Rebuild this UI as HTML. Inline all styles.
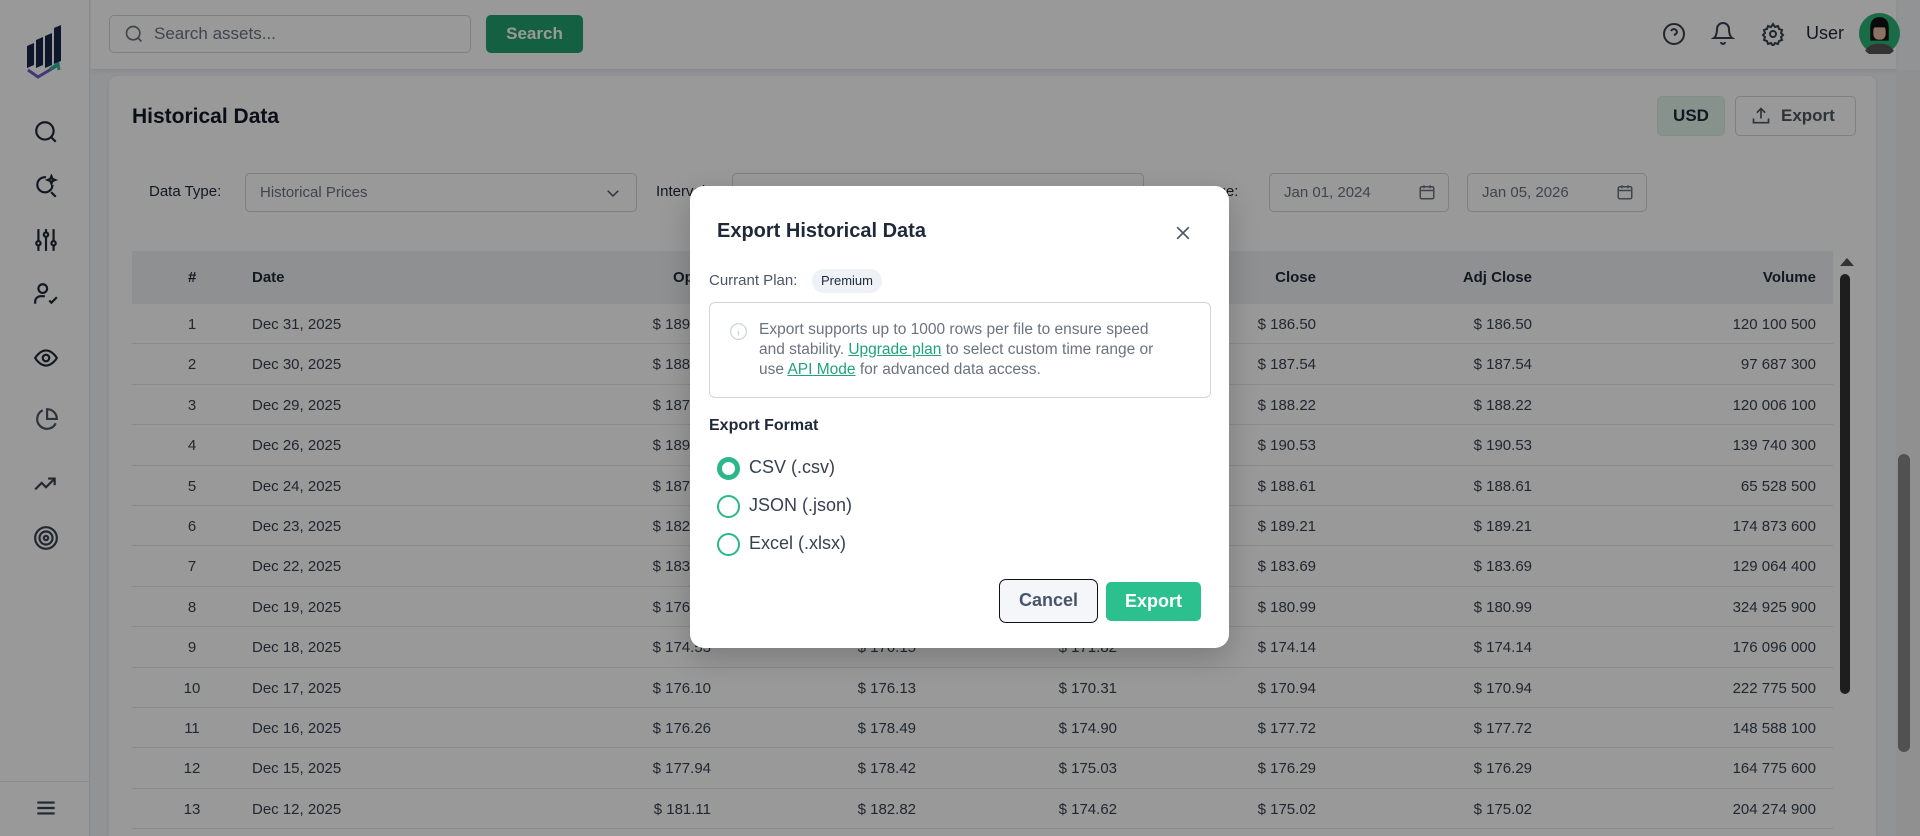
<!DOCTYPE html>
<html style="overflow:hidden;width:1920px;height:836px"><head><meta charset="utf-8"><style>
*{box-sizing:border-box;margin:0;padding:0}
body{width:1920px;height:836px;overflow:hidden;font-family:"Liberation Sans",sans-serif;background:#f4f5f7;position:relative;color:#1f2937}
.abs{position:absolute}
.side{left:0;top:0;width:90px;height:836px;background:#fff;border-right:1px solid #e2e5ea}
.ic{position:absolute;left:33px;width:26px;height:26px}
.top{left:91px;top:0;width:1805px;height:70px;background:#fff;border-bottom:1px solid #e5e7eb;box-shadow:0 2px 4px rgba(0,0,0,.05)}
.card{left:109px;top:76px;width:1767px;height:760px;background:#fff;border-radius:8px 8px 0 0;box-shadow:0 1px 4px rgba(0,0,0,.08)}
.inp{border:1px solid #d1d5db;border-radius:5px;background:#fff;font-size:15px;color:#6b7280;display:flex;align-items:center;padding-left:14px}
.row{position:absolute;left:132px;width:1701px;height:40.4px;border-bottom:1px solid #e5e7eb;font-size:15px;color:#374151}
.row span{position:absolute;top:12px}
.r{text-align:right}
.ov{left:0;top:0;width:1920px;height:836px;background:rgba(0,0,0,.4)}
.modal{left:690px;top:186px;width:539px;height:462px;background:#fff;border-radius:14px;box-shadow:0 10px 30px rgba(0,0,0,.2)}
.rad{position:absolute;left:717px;width:23px;height:23px;border-radius:50%;border:2px solid #2bb78a}
.lab{position:absolute;left:749px;font-size:18px;color:#374151}
</style></head><body>
<div class="abs side">
<svg class="abs" style="left:24px;top:24px" width="40" height="56" viewBox="0 0 40 56"><path d="M3 22l7-3v22l-7 3z" fill="#18254a"/><path d="M12 16l7-3v28l-7 3z" fill="#18254a"/><path d="M21 12l7-3v32l-7 3z" fill="#18254a"/><path d="M30 4l7-3v36l-7 3z" fill="#18254a"/><path d="M4 46l10 7 20-12" stroke="#6b5cc7" stroke-width="3" fill="none"/><path d="M26 45l8-5 1 6" stroke="#2bb78a" stroke-width="3" fill="none"/></svg>
<svg class="ic" style="top:119px" viewBox="0 0 24 24" fill="none" stroke="#1f2937" stroke-width="2"><circle cx="11" cy="11" r="8"/><path d="M21 21l-4.3-4.3"/></svg>
<svg class="ic" style="top:174px" viewBox="0 0 24 24" fill="none" stroke="#1f2937" stroke-width="2"><path d="M18 10a7 7 0 1 1-6-7"/><path d="M21 21l-4.3-4.3"/><path d="M17 2l1 2.5 2.5 1-2.5 1-1 2.5-1-2.5-2.5-1 2.5-1z"/></svg>
<svg class="ic" style="top:227px" viewBox="0 0 24 24" fill="none" stroke="#1f2937" stroke-width="2"><path d="M5 2v20M12 2v20M19 2v20"/><circle cx="5" cy="15" r="2" fill="#fff"/><circle cx="12" cy="7" r="2" fill="#fff"/><circle cx="19" cy="15" r="2" fill="#fff"/></svg>
<svg class="ic" style="top:281px" viewBox="0 0 24 24" fill="none" stroke="#1f2937" stroke-width="2"><circle cx="9" cy="7" r="4"/><path d="M2 21v-2a5 5 0 0 1 5-5h4"/><path d="M15 18l2 2 5-5"/></svg>
<svg class="ic" style="top:345px" viewBox="0 0 24 24" fill="none" stroke="#1f2937" stroke-width="2"><path d="M2 12s4-7 10-7 10 7 10 7-4 7-10 7S2 12 2 12z"/><circle cx="12" cy="12" r="3"/></svg>
<svg class="ic" style="top:407px" viewBox="0 0 24 24" fill="none" stroke="#4b5563" stroke-width="2"><path d="M21 15A9 9 0 1 1 9 3"/><path d="M13 2a9 9 0 0 1 9 9h-9z"/></svg>
<svg class="ic" style="top:471px" viewBox="0 0 24 24" fill="none" stroke="#374151" stroke-width="2"><path d="M2 17l6-6 4 4 8-8"/><path d="M14 7h6v6"/></svg>
<svg class="ic" style="top:525px" viewBox="0 0 24 24" fill="none" stroke="#374151" stroke-width="2"><circle cx="12" cy="12" r="10"/><circle cx="12" cy="12" r="6"/><circle cx="12" cy="12" r="2"/></svg>
<div class="abs" style="left:0;top:781px;width:90px;border-top:1px solid #e5e7eb"></div>
<svg class="ic" style="top:795px" viewBox="0 0 24 24" fill="none" stroke="#374151" stroke-width="2"><path d="M4 7h16M4 12h16M4 17h16"/></svg>
</div>
<div class="abs top"></div>
<div class="abs inp" style="left:109px;top:15px;width:362px;height:38px;font-size:17px;padding-left:44px">Search assets...</div>
<svg class="abs" style="left:124px;top:24px" width="20" height="20" viewBox="0 0 24 24" fill="none" stroke="#6b7280" stroke-width="2"><circle cx="11" cy="11" r="8"/><path d="M21 21l-4.3-4.3"/></svg>
<div class="abs" style="left:486px;top:15px;width:97px;height:38px;background:#22a06f;border-radius:5px;color:#fff;font-size:17px;font-weight:bold;text-align:center;line-height:38px">Search</div>
<svg class="abs" style="left:1662px;top:22px" width="24" height="24" viewBox="0 0 24 24" fill="none" stroke="#374151" stroke-width="2"><circle cx="12" cy="12" r="10"/><path d="M9.1 9a3 3 0 0 1 5.8 1c0 2-3 3-3 3M12 17h.01"/></svg>
<svg class="abs" style="left:1711px;top:21px" width="24" height="24" viewBox="0 0 24 24" fill="none" stroke="#374151" stroke-width="2"><path d="M6 8a6 6 0 0 1 12 0c0 7 3 9 3 9H3s3-2 3-9M10 21a2 2 0 0 0 4 0"/></svg>
<svg class="abs" style="left:1761px;top:22px" width="24" height="24" viewBox="0 0 24 24" fill="none" stroke="#374151" stroke-width="2"><circle cx="12" cy="12" r="3"/><path d="M12 2l2 3 3-1 1 3 3 1-1 3 2 2-2 2 1 3-3 1-1 3-3-1-2 3-2-3-3 1-1-3-3-1 1-3-2-2 2-2-1-3 3-1 1-3 3 1z"/></svg>
<div class="abs" style="left:1806px;top:23px;font-size:18px;color:#1f2937">User</div>
<svg class="abs" style="left:1859px;top:13px" width="41" height="41" viewBox="0 0 40 40"><circle cx="20" cy="20" r="20" fill="#2bb573"/><path d="M6 37c3-6 8-7 14-7s11 1 14 7a20 20 0 0 1-28 0z" fill="#555"/><path d="M11 14c0-7 4-10 9-10s9 3 9 10v13h-18z" fill="#111"/><rect x="14" y="12" width="12" height="14" rx="5" fill="#e6bfa4"/><path d="M13 9h14v5H13z" fill="#111"/></svg>
<div class="abs" style="left:1896px;top:70px;width:24px;height:766px;background:#f0f0f0"></div>
<div class="abs" style="left:1898px;top:454px;width:12px;height:298px;background:#888;border-radius:6px"></div>
<div class="abs card"></div>
<div class="abs" style="left:132px;top:105px;font-size:21px;font-weight:bold;color:#111827">Historical Data</div>
<div class="abs" style="left:1657px;top:96px;width:68px;height:40px;background:#e1f3ec;border-radius:5px;border:1px solid #d6ece3;font-size:17px;font-weight:bold;text-align:center;line-height:38px">USD</div>
<div class="abs" style="left:1735px;top:96px;width:121px;height:40px;border:1px solid #d1d5db;border-radius:5px;font-size:17px;font-weight:bold;color:#4b5563;line-height:38px;padding-left:45px">Export</div>
<svg class="abs" style="left:1751px;top:106px" width="20" height="20" viewBox="0 0 24 24" fill="none" stroke="#4b5563" stroke-width="2"><path d="M12 15V3M7 8l5-5 5 5M3 15v5h18v-5"/></svg>
<div class="abs" style="left:149px;top:183px;font-size:15px;color:#1f2937">Data Type:</div>
<div class="abs inp" style="left:245px;top:173px;width:392px;height:39px">Historical Prices</div>
<svg class="abs" style="left:604px;top:184px" width="18" height="18" viewBox="0 0 24 24" fill="none" stroke="#4b5563" stroke-width="2"><path d="M5 9l7 7 7-7"/></svg>
<div class="abs" style="left:656px;top:183px;font-size:15px">Interval:</div>
<div class="abs inp" style="left:732px;top:173px;width:412px;height:39px"></div>
<div class="abs" style="left:1190px;top:183px;font-size:15px">Range:</div>
<div class="abs inp" style="left:1269px;top:173px;width:180px;height:39px">Jan 01, 2024</div>
<div class="abs inp" style="left:1467px;top:173px;width:180px;height:39px">Jan 05, 2026</div>
<svg class="abs" style="left:1418px;top:183px" width="18" height="18" viewBox="0 0 24 24" fill="none" stroke="#6b7280" stroke-width="2"><rect x="3" y="5" width="18" height="16" rx="2"/><path d="M3 10h18M8 3v4M16 3v4"/></svg>
<svg class="abs" style="left:1616px;top:183px" width="18" height="18" viewBox="0 0 24 24" fill="none" stroke="#6b7280" stroke-width="2"><rect x="3" y="5" width="18" height="16" rx="2"/><path d="M3 10h18M8 3v4M16 3v4"/></svg>
<div class="abs" style="left:132px;top:251px;width:1701px;height:53px;background:#eef0f3;font-size:15px;font-weight:bold;color:#1f2937">
<span class="abs" style="left:56px;top:18px">#</span><span class="abs" style="left:120px;top:18px">Date</span><span class="abs" style="left:541px;top:18px">Open</span><span class="abs" style="right:517px;top:18px">Close</span><span class="abs" style="right:301px;top:18px">Adj Close</span><span class="abs" style="right:17px;top:18px">Volume</span></div>
<div class="abs" style="left:1840px;top:258px;width:0;height:0;border-left:7px solid transparent;border-right:7px solid transparent;border-bottom:8px solid #555"></div>
<div class="abs" style="left:1840px;top:274px;width:10px;height:420px;background:#333;border-radius:5px"></div>
<div id="rows"></div>
<script>
var d=[["Dec 31, 2025","189.00","190.10","186.00","186.50","120 100 500"],["Dec 30, 2025","188.40","189.20","186.90","187.54","97 687 300"],["Dec 29, 2025","187.80","189.00","187.10","188.22","120 006 100"],["Dec 26, 2025","189.90","191.20","189.10","190.53","139 740 300"],["Dec 24, 2025","187.60","189.00","187.20","188.61","65 528 500"],["Dec 23, 2025","182.90","189.80","182.50","189.21","174 873 600"],["Dec 22, 2025","183.10","184.80","182.40","183.69","129 064 400"],["Dec 19, 2025","176.70","181.50","176.30","180.99","324 925 900"],["Dec 18, 2025","174.53","176.15","171.82","174.14","176 096 000"],["Dec 17, 2025","176.10","176.13","170.31","170.94","222 775 500"],["Dec 16, 2025","176.26","178.49","174.90","177.72","148 588 100"],["Dec 15, 2025","177.94","178.42","175.03","176.29","164 775 600"],["Dec 12, 2025","181.11","182.82","174.62","175.02","204 274 900"]];
var h="";d.forEach(function(r,i){h+='<div class="row" style="top:'+(304+i*40.4)+'px"><span style="left:56px;width:20px;text-align:center;margin-left:-6px">'+(i+1)+'</span><span style="left:120px">'+r[0]+'</span><span class="r" style="right:1122px">$ '+r[1]+'</span><span class="r" style="right:917px">$ '+r[2]+'</span><span class="r" style="right:716px">$ '+r[3]+'</span><span class="r" style="right:517px">$ '+r[4]+'</span><span class="r" style="right:301px">$ '+r[4]+'</span><span class="r" style="right:17px">'+r[5]+'</span></div>'});document.getElementById("rows").innerHTML=h;
</script>
<div class="abs ov"></div>
<div class="abs modal"></div>
<div class="abs" style="left:717px;top:220px;font-size:20px;font-weight:bold;color:#1f2937">Export Historical Data</div>
<svg class="abs" style="left:1173px;top:223px" width="20" height="20" viewBox="0 0 24 24" fill="none" stroke="#4b5563" stroke-width="2"><path d="M5 5l14 14M19 5L5 19"/></svg>
<div class="abs" style="left:709px;top:272px;font-size:15px;color:#4b5563">Currant Plan:</div>
<div class="abs" style="left:812px;top:269px;width:70px;height:24px;background:#eef1f5;border-radius:12px;font-size:13px;text-align:center;line-height:24px;color:#1f2937">Premium</div>
<div class="abs" style="left:709px;top:302px;width:502px;height:96px;border:1px solid #d1d5db;border-radius:6px"></div>
<svg class="abs" style="left:729px;top:322px" width="19" height="19" viewBox="0 0 24 24" fill="none" stroke="#cbd5e1" stroke-width="1.6"><circle cx="12" cy="12" r="10"/><path d="M12 11v6M12 7.5v.5"/></svg>
<div class="abs" style="left:759px;top:320px;width:416px;font-size:15.5px;line-height:20px;color:#6b7280">Export supports up to 1000 rows per file to ensure speed and stability. <u style="color:#1fa37a">Upgrade plan</u> to select custom time range or use <u style="color:#1fa37a">API Mode</u> for advanced data access.</div>
<div class="abs" style="left:709px;top:417px;font-size:16px;font-weight:bold;color:#1f2937">Export Format</div>
<div class="rad" style="top:457px;border-width:5px"></div>
<div class="lab" style="top:457px">CSV (.csv)</div>
<div class="rad" style="top:495px"></div>
<div class="lab" style="top:495px">JSON (.json)</div>
<div class="rad" style="top:533px"></div>
<div class="lab" style="top:533px">Excel (.xlsx)</div>
<div class="abs" style="left:999px;top:579px;width:99px;height:44px;border:1.5px solid #111;border-radius:7px;background:#f4f6f9;font-size:18px;font-weight:bold;color:#475569;text-align:center;line-height:41px">Cancel</div>
<div class="abs" style="left:1106px;top:582px;width:95px;height:39px;background:#2bc08e;border-radius:5px;font-size:18px;font-weight:bold;color:#fff;text-align:center;line-height:39px">Export</div>
</body></html>
